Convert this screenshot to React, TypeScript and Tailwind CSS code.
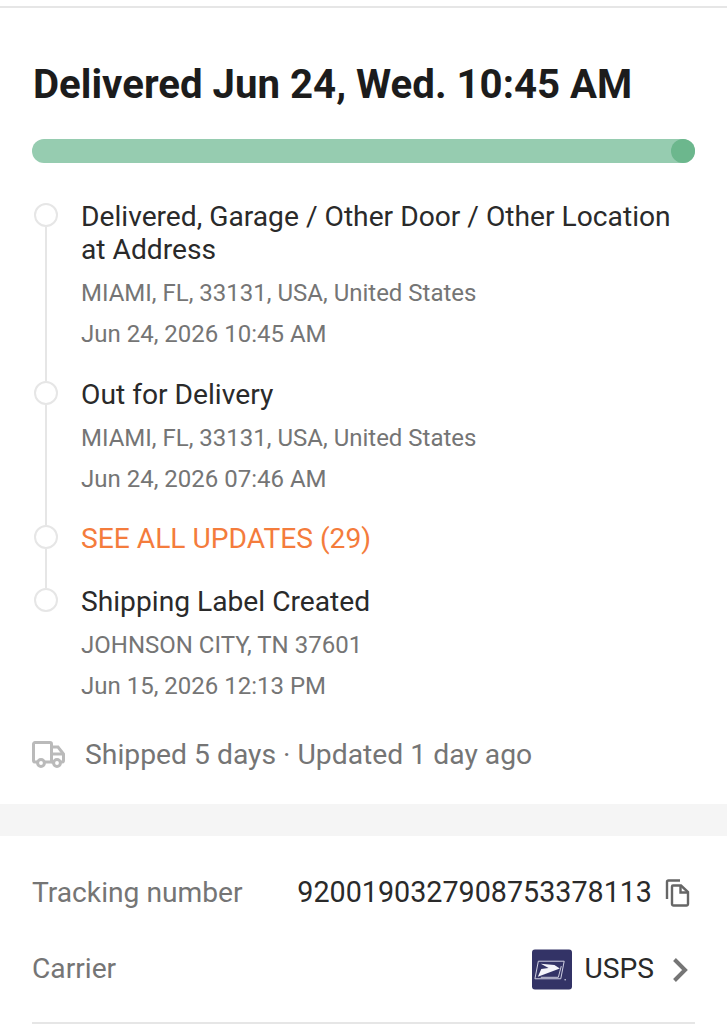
const events = [
  {
    title: ["Delivered, Garage / Other Door / Other Location", "at Address"],
    place: "MIAMI, FL, 33131, USA, United States",
    time: "Jun 24, 2026 10:45 AM",
    gap: "pb-[27px]",
  },
  {
    title: ["Out for Delivery"],
    place: "MIAMI, FL, 33131, USA, United States",
    time: "Jun 24, 2026 07:46 AM",
    gap: "pb-[26px]",
  },
];

const Dot = ({ last = false }: { last?: boolean }) => (
  <div className="flex w-[49px] shrink-0 flex-col pt-[3px] pl-[2px]">
    <div className="h-[24px] w-[24px] shrink-0 rounded-full border-2 border-[#e6e6e6] bg-white" />
    {!last && <div className="-mb-[3px] ml-[11px] w-[2px] flex-1 bg-[#e6e6e6]" />}
  </div>
);

const UspsLogo = () => (
  <svg width="40" height="41" viewBox="0 0 41 41" className="shrink-0">
    <rect width="41" height="41" rx="3" fill="#333366" />
    <path d="M6.500 12H33L29.500 30H3Z" fill="none" stroke="#d5d5e6" strokeWidth="1" />
    <path d="M9 14.500L23 16L28.500 19.500L6 28L9.500 20L17 19Z" fill="#f4f4fa" />
    <path d="M9 28.500H27L30 17" fill="none" stroke="#f4f4fa" strokeWidth="0.8" />
    <circle cx="34" cy="31" r="0.8" fill="#d5d5e6" />
  </svg>
);

export default function App() {
  return (
    <div className="h-[1024px] w-[727px] overflow-hidden bg-white font-['Roboto',sans-serif]">
      <div className="mt-[6px] h-[2px] bg-[#e6e6e6]" />

      {/* Status */}
      <div className="px-[32px] pt-[51px]">
        <h1 className="ml-[1px] text-[40.2px] leading-[52px] font-bold whitespace-nowrap text-[#1c1c1c]">
          Delivered Jun 24, Wed. 10:45 AM
        </h1>
        <div className="mt-[28px] flex h-[24px] justify-end rounded-full bg-[#96ccb0]">
          <div className="h-[24px] w-[24px] rounded-full bg-[#6cb78d]" />
        </div>

        <div className="mt-[37px] flex flex-col">
          {events.map((ev) => (
            <div key={ev.time} className="flex">
              <Dot />
              <div className={ev.gap}>
                {ev.title.map((line) => (
                  <p key={line} className="text-[28.2px] leading-[33px] whitespace-nowrap text-[#2a2a2a]">
                    {line}
                  </p>
                ))}
                <p className="mt-[11px] text-[24px] leading-[33px] text-[#757575]">{ev.place}</p>
                <p className="mt-[8px] text-[24px] leading-[33px] text-[#757575]">{ev.time}</p>
              </div>
            </div>
          ))}
          <div className="flex">
            <Dot />
            <p className="pb-[30px] text-[28.2px] leading-[33px] text-[#f47c3c]">SEE ALL UPDATES (29)</p>
          </div>
          <div className="flex">
            <Dot last />
            <div>
              <p className="text-[28.2px] leading-[33px] text-[#2a2a2a]">Shipping Label Created</p>
              <p className="mt-[11px] text-[24px] leading-[33px] text-[#757575]">JOHNSON CITY, TN 37601</p>
              <p className="mt-[8px] text-[24px] leading-[33px] text-[#757575]">Jun 15, 2026 12:13 PM</p>
            </div>
          </div>
        </div>

        <div className="mt-[35px] flex items-center">
          <svg width="33" height="27" viewBox="0 0 33 27" fill="none" stroke="#bababa" strokeWidth="3" className="shrink-0">
            <path d="M5 21H3a1.500 1.500 0 0 1-1.500-1.500V3A1.500 1.500 0 0 1 3 1.500H18A1.500 1.500 0 0 1 19.500 3V21H13" />
            <path d="M19.500 6H26L31.500 13V19.500A1.500 1.500 0 0 1 30 21H29M21 21H19.500" />
            <path d="M19.500 13H31" />
            <circle cx="9" cy="22" r="3.400" />
            <circle cx="25" cy="22" r="3.400" />
          </svg>
          <span className="ml-[20px] text-[28.3px] leading-[33px] text-[#757575]">Shipped 5 days · Updated 1 day ago</span>
        </div>
      </div>

      <div className="mt-[33px] h-[32px] bg-[#f5f5f5]" />

      {/* Details */}
      <div className="px-[32px] pt-[40px]">
        <div className="flex h-[32px] translate-y-[1px] items-center justify-between">
          <span className="text-[28.2px] text-[#757575]">Tracking number</span>
          <div className="flex items-center gap-[13px] pr-[5px]">
            <span className="text-[28.7px] text-[#2a2a2a]">9200190327908753378113</span>
            <svg width="25" height="28" viewBox="0 0 25 28" fill="none" stroke="#666" strokeWidth="2.4" className="shrink-0">
              <path d="M2 20V3a1.500 1.500 0 0 1 1.500-1.500H15" />
              <path d="M7 7.500a1 1 0 0 1 1-1H16L23 13V25a1.500 1.500 0 0 1-1.500 1.500H8.500A1.500 1.500 0 0 1 7 25Z" />
              <path d="M15.500 6.500V13.500H23" />
            </svg>
          </div>
        </div>
        <div className="mt-[41px] flex h-[41px] items-center justify-between">
          <span className="text-[28.2px] text-[#757575]">Carrier</span>
          <div className="flex items-center">
            <UspsLogo />
            <span className="ml-[12px] text-[28.2px] text-[#2a2a2a]">USPS</span>
            <svg width="16" height="24" viewBox="0 0 16 24" fill="none" stroke="#757575" strokeWidth="4" className="mr-[7px] ml-[18px] shrink-0">
              <path d="M2.500 1.500L13 12L2.500 22.500" />
            </svg>
          </div>
        </div>
        <div className="mt-[32px] h-[2px] bg-[#e6e6e6]" />
      </div>
    </div>
  );
}
